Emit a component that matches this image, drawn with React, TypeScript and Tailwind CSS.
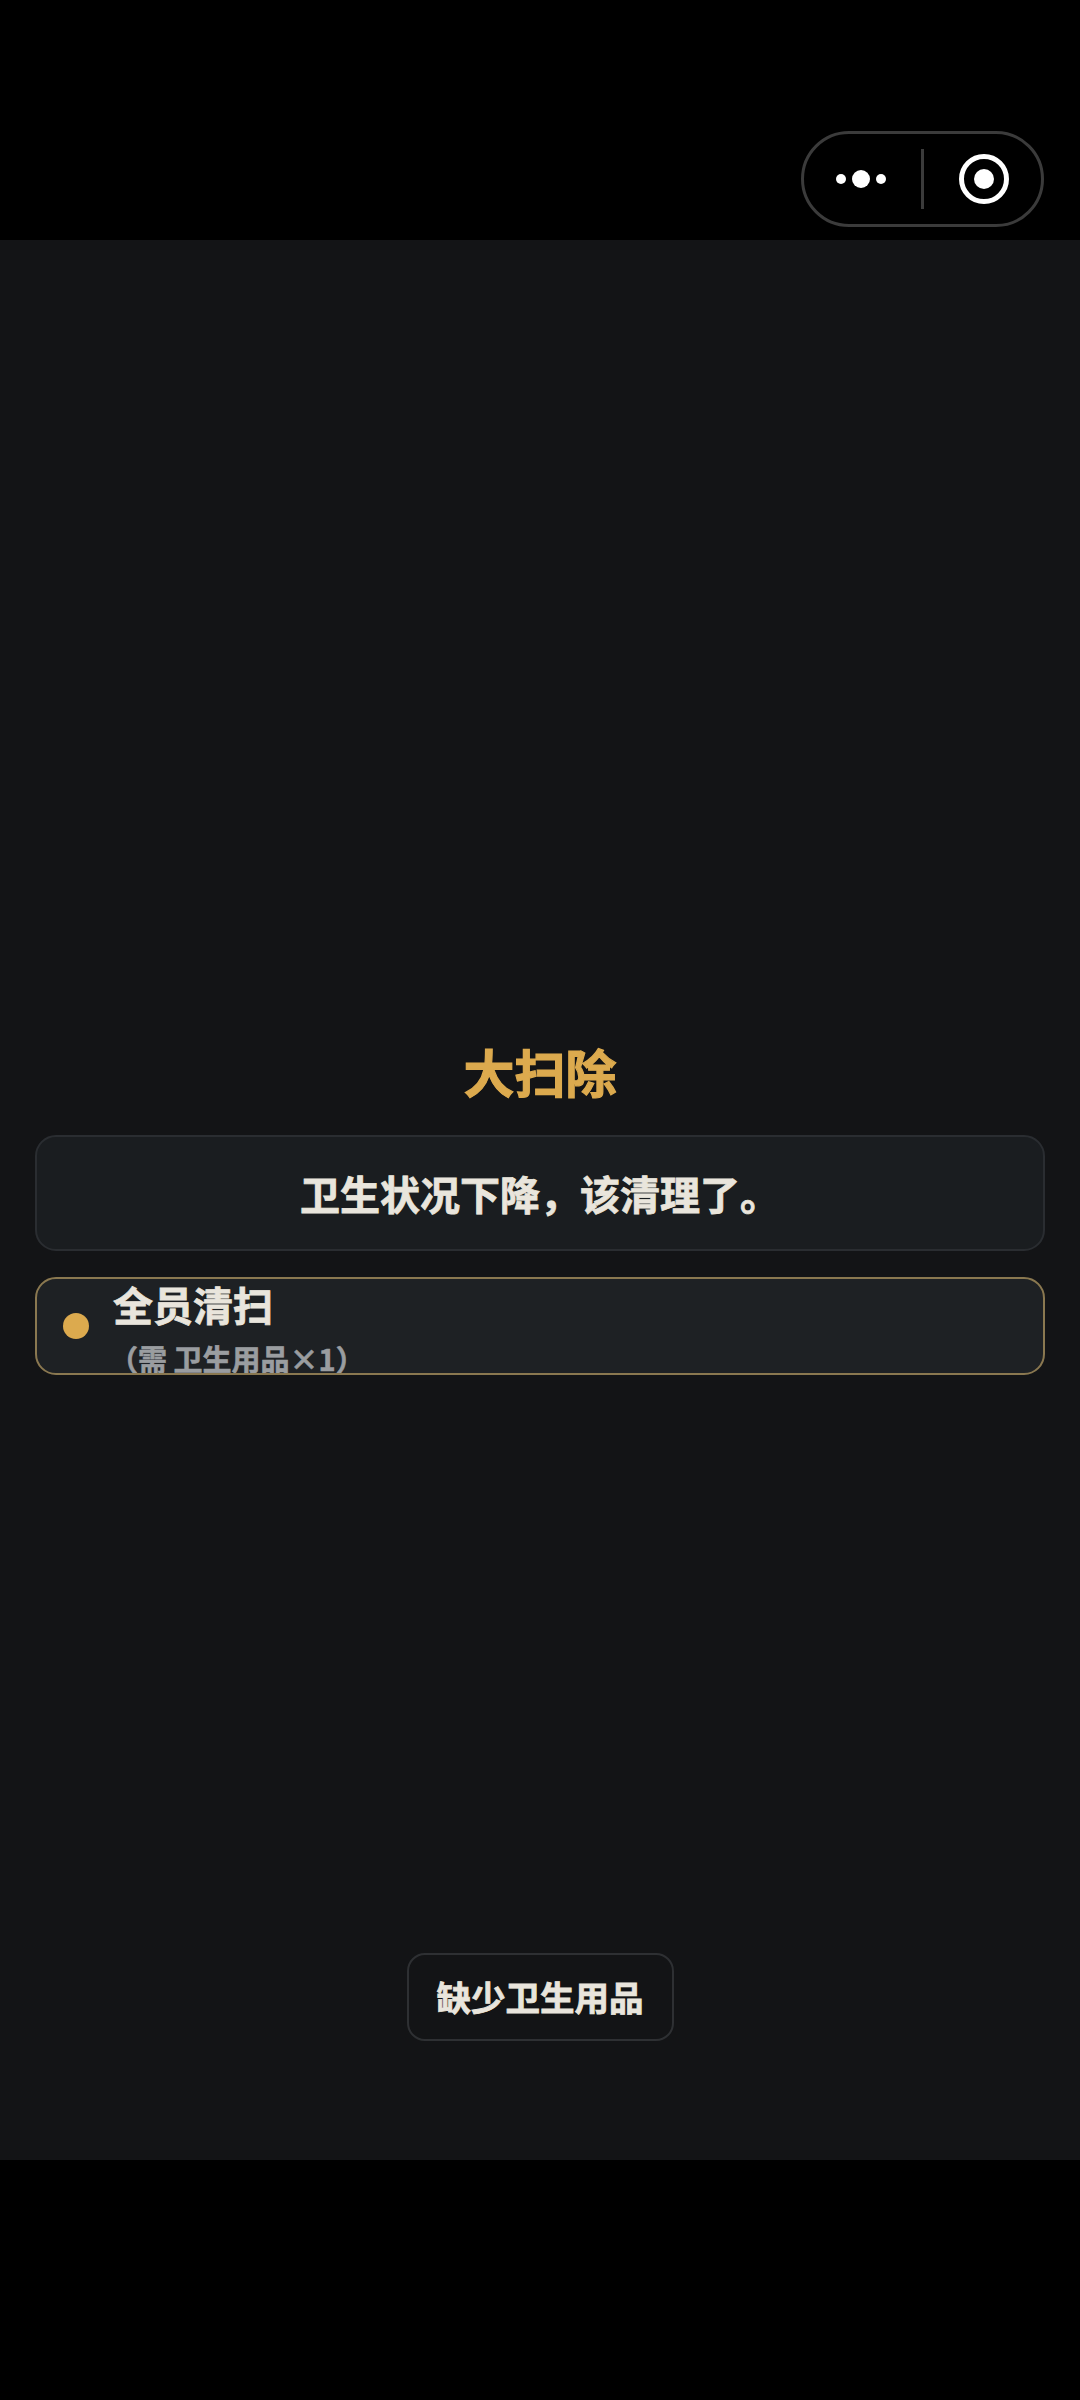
export default function App() {
  const font = { fontFamily: '"Noto Sans CJK SC", "Noto Sans", sans-serif' };
  return (
    <div className="w-[1080px] h-[2400px] bg-black flex flex-col" style={font}>
      <header className="h-[240px] shrink-0 flex justify-end pt-[131px] pr-[36px]">
        <div className="w-[243px] h-[96px] rounded-[48px] border-[3px] border-[#3b3b3b] flex items-center">
          <div className="w-[117px] h-full flex items-center justify-center">
            <svg width="54" height="20" viewBox="0 0 54 20" fill="#ffffff">
              <circle cx="5" cy="10" r="5" />
              <circle cx="25" cy="10" r="9" />
              <circle cx="45" cy="10" r="5" />
            </svg>
          </div>
          <div className="w-[3px] h-[60px] bg-[#3b3b3b]" />
          <div className="flex-1 h-full flex items-center justify-center pl-[2px]">
            <svg width="50" height="50" viewBox="0 0 50 50">
              <circle cx="25" cy="25" r="22.5" fill="none" stroke="#ffffff" strokeWidth="5" />
              <circle cx="25" cy="25" r="10" fill="#ffffff" />
            </svg>
          </div>
        </div>
      </header>
      <main className="h-[1920px] bg-[#131416] flex flex-col items-center px-[35px] pt-[795px]">
        <h1 className="text-[51px] leading-[72px] font-bold [-webkit-text-stroke:1.2px] text-[#dcaa4e] text-center m-0">大扫除</h1>
        <div className="mt-[28px] w-full h-[116px] rounded-[21px] border-2 border-[#2a2d31] bg-[#1a1d20] flex items-center justify-center">
          <p className="text-[40px] font-bold [-webkit-text-stroke:0.8px] text-[#e9e5dc] leading-[56px]">卫生状况下降，该清理了。</p>
        </div>
        <div className="mt-[26px] w-full h-[98px] rounded-[21px] border-2 border-[#8a7850] bg-[#1e2124] flex items-center pl-[26px] overflow-hidden">
          <span className="w-[26px] h-[26px] rounded-full bg-[#dcaa4e] shrink-0" />
          <div className="ml-[24px] flex flex-col pt-[3px]">
            <span className="text-[40px] font-bold [-webkit-text-stroke:0.8px] text-[#e9e5dc] leading-[56px]">全员清扫</span>
            <span className="mt-[5px] -ml-[4px] text-[29px] font-bold [-webkit-text-stroke:0.6px] text-[#9a9da0] leading-[42px]">（需 卫生用品×1）</span>
          </div>
        </div>
        <button className="mt-[578px] w-[267px] h-[88px] rounded-[18px] border-2 border-[#2e3033] bg-transparent text-[34.5px] font-bold [-webkit-text-stroke:0.8px] text-[#e9e5dc] flex items-center justify-center">
          缺少卫生用品
        </button>
      </main>
      <footer className="h-[240px] shrink-0 bg-black" />
    </div>
  );
}
